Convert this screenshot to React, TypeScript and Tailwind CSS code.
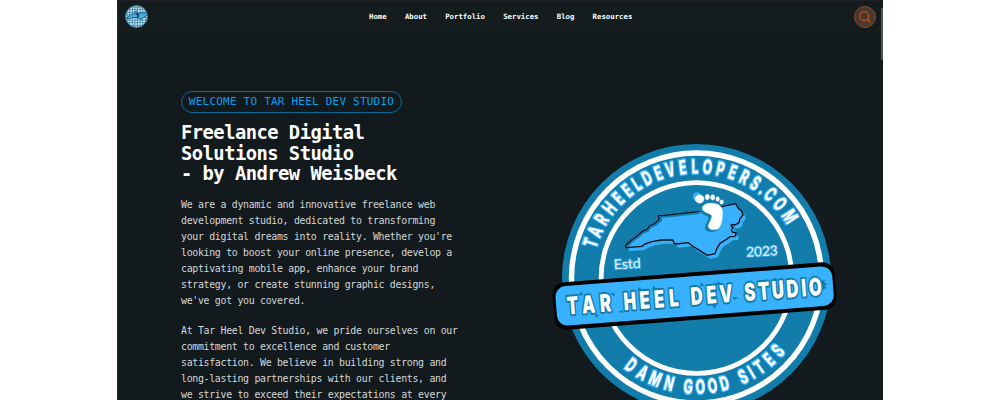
import React from "react";

const navItems = ["Home", "About", "Portfolio", "Services", "Blog", "Resources"];

const introLines = [
  "We are a dynamic and innovative freelance web",
  "development studio, dedicated to transforming",
  "your digital dreams into reality. Whether you're",
  "looking to boost your online presence, develop a",
  "captivating mobile app, enhance your brand",
  "strategy, or create stunning graphic designs,",
  "we've got you covered.",
];

const prideLines = [
  "At Tar Heel Dev Studio, we pride ourselves on our",
  "commitment to excellence and customer",
  "satisfaction. We believe in building strong and",
  "long-lasting partnerships with our clients, and",
  "we strive to exceed their expectations at every",
];

type Placed = [string, number];

// Letter and its angle in degrees, measured from the top of the badge.
const topArc: Placed[] = [
  ["T", -71.6], ["A", -65.4], ["R", -58.3], ["H", -51.3], ["E", -44.5], ["E", -38.3],
  ["L", -32.4], ["D", -26.4], ["E", -20], ["V", -13.8], ["E", -7.2], ["L", -0.8],
  ["O", 5.6], ["P", 12.4], ["E", 18.9], ["R", 25.4], ["S", 31.8], [".", 36.6],
  ["C", 41.4], ["O", 48.3], ["M", 56.6],
];

// Letter and its angle in degrees, measured from the bottom of the badge.
const bottomArc: Placed[] = [
  ["D", 37], ["A", 29.7], ["M", 22.2], ["N", 14.6], ["G", 4.4], ["O", -2],
  ["O", -8.4], ["D", -14.8], ["S", -25.2], ["I", -30.2], ["T", -35.2], ["E", -41.6], ["S", -48.2],
];

// Letter and its horizontal offset from the middle of the banner.
const bannerLetters: Placed[] = [
  ["T", -122.5], ["A", -106.5], ["R", -89.5], ["H", -65], ["E", -50], ["E", -35.5],
  ["L", -21], ["D", 2], ["E", 17], ["V", 31.5], ["S", 55.5], ["T", 69.5],
  ["U", 83.5], ["D", 98], ["I", 109.5], ["O", 121],
];

const CX = 696.5;
const CY = 278;

const STATE =
  "M107 203L108 195L125 180L145 165L155 155L172 148L178 138L195 130L208 118L205 107L225 106L330 94L400 79L437 71L445 85L455 94L459 105L450 115L447 128L435 135L425 133L423 138L430 142L424 150L427 156L438 158L435 169L420 170L408 179L390 190L381 205L375 221L352 226L330 212L310 200L295 188L260 192L253 190L248 180L215 180L185 185L165 192L155 199L107 203Z";

function Foot() {
  return (
    <g>
      <path d="M337 83C341 72 358 68 374 71C391 73 397 84 397 98C397 116 394 132 388 142C382 151 359 151 356 142C353 132 366 120 366 108C364 97 338 101 337 83Z" />
      <ellipse cx="329" cy="57" rx="13" ry="12" />
      <ellipse cx="352" cy="51" rx="6" ry="8" />
      <ellipse cx="368" cy="52" rx="6" ry="8" />
      <ellipse cx="383" cy="57" rx="5" ry="7" />
      <ellipse cx="395" cy="66" rx="5" ry="6" />
    </g>
  );
}

function Badge() {
  return (
    <svg
      className="block h-[260px] w-[290px] shrink-0"
      viewBox="550 140 290 260"
      fontFamily="Inter, 'Liberation Sans', sans-serif"
    >
      <circle cx={CX} cy={CY + 0.4} r="134.5" fill="#127dab" />
      <circle cx={CX} cy={CY} r="125" fill="none" stroke="#fff" strokeWidth="5.4" />
      <circle cx={CX} cy={CY} r="95.4" fill="none" stroke="#fff" strokeWidth="4.8" />

      <g fontSize="19.8" fontWeight="800" textAnchor="middle" fill="#fff" stroke="#38b0fb" strokeWidth="2.8" strokeLinejoin="round" paintOrder="stroke">
        {topArc.map(([letter, angle], i) => (
          <text key={`t${i}`} transform={`translate(${CX} ${CY}) rotate(${angle}) translate(0 -104.6) scale(0.62 1)`}>
            {letter}
          </text>
        ))}
        {bottomArc.map(([letter, angle], i) => (
          <text key={`b${i}`} transform={`translate(${CX} ${CY}) rotate(${angle}) translate(0 116) scale(0.62 1)`}>
            {letter}
          </text>
        ))}
      </g>

      <g transform="translate(590 180) scale(0.33333)">
        <path d={STATE} transform="translate(9 11)" fill="#38b0fb" />
        <path d={STATE} fill="#38b0fb" />
        <path d="M109 200L125 186L147 169L158 159L174 152L182 141L198 134L213 121L211 112L328 99" fill="none" stroke="#127dab" strokeWidth="6" />
        <path d={STATE} fill="none" stroke="#061018" strokeWidth="4" strokeLinejoin="round" />
        <g transform="translate(-7 4)" fill="#127dab" stroke="#127dab" strokeWidth="7">
          <Foot />
        </g>
        <ellipse cx="321" cy="50" rx="13" ry="13" fill="#38b0fb" />
        <g fill="#fff" stroke="#fff" strokeWidth="2">
          <Foot />
        </g>
      </g>

      <g fontFamily="Lato, sans-serif" fontSize="13.5" fill="#e4f6ff" stroke="#2f9fe0" strokeWidth="2" strokeLinejoin="round" paintOrder="stroke">
        <text transform="translate(614 269.3) rotate(-3)" textLength="27" lengthAdjust="spacingAndGlyphs">Estd</text>
        <text transform="translate(746.5 256.8) rotate(-3)" textLength="31.5" lengthAdjust="spacingAndGlyphs">2023</text>
      </g>

      <g transform="translate(694.6 296) rotate(-4.4)">
        <rect x="-141.3" y="-23.8" width="282.6" height="47.6" rx="12" fill="#000" />
        <rect x="-138.8" y="-19.8" width="277.6" height="39.6" rx="10.5" fill="#38b1ff" />
        <path
          d="M-116 -10l4 -3 0 4M-84 -9l4 0 0 3M-57 -10l3 -3 1 4M-42 -10l2 -3 2 4M6 -10l2 -3 2 4M20 -10l6 -2 -1 3M80 -10l2 -2 2 3M127 -5l4 -1 -1 3 3 1 -3 2 2 2 -5 2M38 4l5 1 -4 2M-73 9l-4 1 5 1M-101 11l2 3 2 -3M17 11l2 3 2 -4"
          fill="#127dab"
          stroke="#127dab"
          strokeWidth="0.5"
        />
        <g fontSize="24.2" fontWeight="900" textAnchor="middle" fill="#fff" stroke="#127dab" strokeWidth="4" strokeLinejoin="round" paintOrder="stroke">
          {bannerLetters.map(([letter, x], i) => (
            <text key={i} transform={`translate(${x} 8.8) scale(0.69 1)`}>
              {letter}
            </text>
          ))}
        </g>
      </g>
    </svg>
  );
}

function Avatar() {
  return (
    <svg className="h-[23px] w-[23px] shrink-0" viewBox="0 0 23 23">
      <defs>
        <pattern id="gingham" width="2.6" height="2.6" patternUnits="userSpaceOnUse">
          <rect width="2.6" height="2.6" fill="#3f89ae" />
          <rect width="1.6" height="1.6" fill="#e6f6fb" />
        </pattern>
        <clipPath id="disc">
          <circle cx="11.5" cy="11.5" r="11" />
        </clipPath>
      </defs>
      <g clipPath="url(#disc)">
        <rect width="23" height="23" fill="url(#gingham)" />
        <path d="M1.5 13.5L5.5 9.5L12 8.5L20.5 7.6L22 10L18.5 12.5L16 14.5L12.5 12.8L8 12.4L4 13.8Z" fill="#45b0e4" stroke="#145070" strokeWidth="0.8" />
        <path d="M11 8.4c1.5-1 3.2-.2 3 1.5c-.1 1.4-.4 2.8-1.3 3.2c-1.4.4-1.1-1.2-.5-2.2c.3-1.1-1.4-1.2-1.2-2.5Z" fill="#173f60" />
        <path d="M9.6 6.6h3.2" stroke="#173f60" strokeWidth="1.1" strokeDasharray="1 .6" />
      </g>
      <circle cx="11.5" cy="11.5" r="10.7" fill="none" stroke="#3c8fb8" strokeWidth="0.8" />
    </svg>
  );
}

function Paragraph({ lines }: { lines: string[] }) {
  return (
    <p className="text-[9.9px] leading-[16.02px] tracking-[-0.3px] whitespace-nowrap text-[#d3d7d8]">
      {lines.map((line) => (
        <span key={line} className="block">
          {line}
        </span>
      ))}
    </p>
  );
}

export default function App() {
  return (
    <div className="h-[400px] overflow-hidden bg-white font-['DejaVu_Sans_Mono',monospace]">
      <div className="relative mx-[117px] h-[400px] overflow-hidden border-t border-l border-t-[#202126] border-l-[#25292b] bg-[#131a1d]">
        <header className="flex h-[32px] items-center border-b border-[#11181a] bg-[#141c1e] pr-[7px] pl-[7px]">
          <Avatar />
          <nav className="ml-[221px] flex gap-[18.2px] text-[7.35px] font-bold text-white">
            {navItems.map((item) => (
              <a key={item} href="#">
                {item}
              </a>
            ))}
          </nav>
          <button
            aria-label="Search"
            className="ml-auto flex h-[22px] w-[22px] items-center justify-center rounded-full border border-[#8a4526] bg-[#4a392f]"
          >
            <svg className="h-3 w-3" viewBox="0 0 12 12" fill="none" stroke="#cf541d" strokeWidth="1.1" strokeLinecap="round">
              <circle cx="5.2" cy="5.2" r="4.4" />
              <path d="M8.5 8.5L11.2 11.2" />
            </svg>
          </button>
        </header>
        <main className="flex items-start pl-[63px]">
          <section className="w-[290px] shrink-0 pt-[58px]">
            <div className="flex h-[22px] w-[221px] items-center justify-center rounded-full border border-[#086b96] pt-px text-[11px] tracking-[0.22px] whitespace-nowrap text-[#05a0ec]">
              WELCOME TO TAR HEEL DEV STUDIO
            </div>
            <h1 className="mt-[10px] mb-[12.2px] text-[18.8px] leading-[20.7px] font-bold tracking-[-0.52px] whitespace-nowrap text-white">
              Freelance Digital
              <br />
              Solutions Studio
              <br />- by Andrew Weisbeck
            </h1>
            <div className="flex flex-col gap-[14px]">
              <Paragraph lines={introLines} />
              <Paragraph lines={prideLines} />
            </div>
          </section>
          <div className="ml-[79px] pt-[107px]">
            <Badge />
          </div>
        </main>
        <div className="absolute top-[7px] right-0 h-[52px] w-[2px] rounded-full bg-[#50575a]" />
      </div>
    </div>
  );
}
